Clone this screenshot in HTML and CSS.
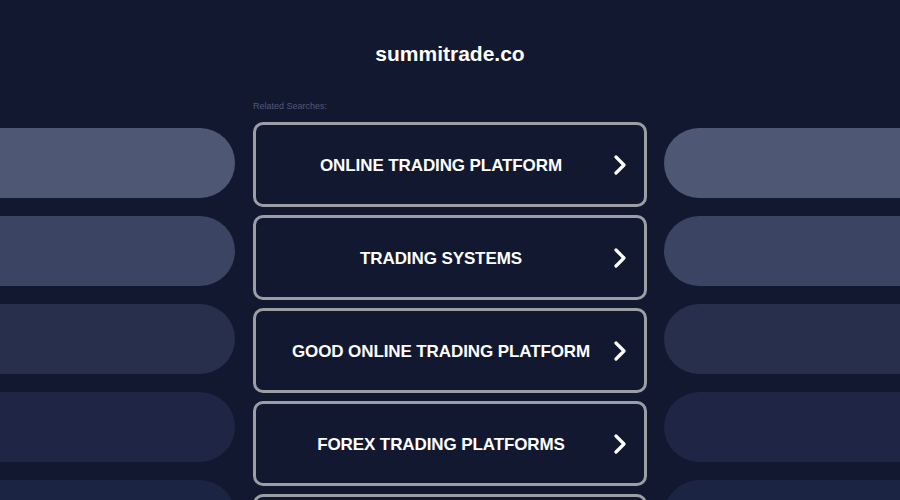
FILE: index.html
```html
<!DOCTYPE html>
<html lang="en">
<head>
<meta charset="utf-8">
<title>summitrade.co</title>
<link rel="stylesheet" href="styles.css">
</head>
<body>
<header class="header">
  <h1 class="domain">summitrade.co</h1>
</header>
<main class="layout">
  <div class="pills pills-left">
    <div class="pill p1"></div>
    <div class="pill p2"></div>
    <div class="pill p3"></div>
    <div class="pill p4"></div>
    <div class="pill p5"></div>
  </div>
  <section class="center">
    <div class="label">Related Searches:</div>
    <div class="links">
      <a class="link" href="#"><span class="link-text">ONLINE TRADING PLATFORM</span><svg class="chev" width="12" height="20" viewBox="0 0 12 20"><path d="M2 2 L10 10 L2 18" fill="none" stroke="#fff" stroke-width="3.2" stroke-linecap="round" stroke-linejoin="round"/></svg></a>
      <a class="link" href="#"><span class="link-text">TRADING SYSTEMS</span><svg class="chev" width="12" height="20" viewBox="0 0 12 20"><path d="M2 2 L10 10 L2 18" fill="none" stroke="#fff" stroke-width="3.2" stroke-linecap="round" stroke-linejoin="round"/></svg></a>
      <a class="link" href="#"><span class="link-text">GOOD ONLINE TRADING PLATFORM</span><svg class="chev" width="12" height="20" viewBox="0 0 12 20"><path d="M2 2 L10 10 L2 18" fill="none" stroke="#fff" stroke-width="3.2" stroke-linecap="round" stroke-linejoin="round"/></svg></a>
      <a class="link" href="#"><span class="link-text">FOREX TRADING PLATFORMS</span><svg class="chev" width="12" height="20" viewBox="0 0 12 20"><path d="M2 2 L10 10 L2 18" fill="none" stroke="#fff" stroke-width="3.2" stroke-linecap="round" stroke-linejoin="round"/></svg></a>
      <a class="link" href="#"></a>
    </div>
  </section>
  <div class="pills pills-right">
    <div class="pill p1"></div>
    <div class="pill p2"></div>
    <div class="pill p3"></div>
    <div class="pill p4"></div>
    <div class="pill p5"></div>
  </div>
</main>
</body>
</html>
```
FILE: styles.css
```css
html, body {
  margin: 0;
  padding: 0;
  background: #111830;
  height: 100%;
  overflow: hidden;
}
body {
  font-family: "Liberation Sans", Arial, sans-serif;
  color: #fff;
}
.header {
  height: 98px;
  display: flex;
  justify-content: center;
  box-sizing: border-box;
  padding-top: 40px;
}
.domain {
  margin: 0;
  font-size: 21px;
  line-height: 28px;
  font-weight: bold;
  color: #fff;
}
.layout {
  display: grid;
  grid-template-columns: 1fr 394px 1fr;
  column-gap: 18px;
}
.pills {
  display: flex;
  flex-direction: column;
  gap: 18px;
  padding-top: 30px;
}
.pill {
  height: 70px;
  flex: none;
}
.pills-left .pill {
  border-radius: 0 35px 35px 0;
}
.pills-right .pill {
  border-radius: 35px 0 0 35px;
  margin-left: -1px;
}
.p1 { background: #4e5875; }
.p2 { background: #3b4462; }
.p3 { background: #272f4d; }
.p4 { background: #1e2545; }
.p5 { background: #1c2444; }
.center {
  display: flex;
  flex-direction: column;
}
.label {
  font-size: 9px;
  line-height: 16px;
  color: #525a78;
  margin-bottom: 8px;
}
.links {
  display: flex;
  flex-direction: column;
  gap: 8px;
}
.link {
  height: 85px;
  flex: none;
  box-sizing: border-box;
  border: 3px solid #9c9ea6;
  border-radius: 10px;
  display: flex;
  align-items: center;
  padding: 0 18px;
  gap: 6px;
  text-decoration: none;
  color: #fff;
  background: #111830;
}
.link-text {
  flex: 1;
  text-align: center;
  font-size: 17px;
  font-weight: bold;
  letter-spacing: -0.1px;
  padding-top: 2px;
}
.chev {
  flex: none;
  display: block;
}
```
